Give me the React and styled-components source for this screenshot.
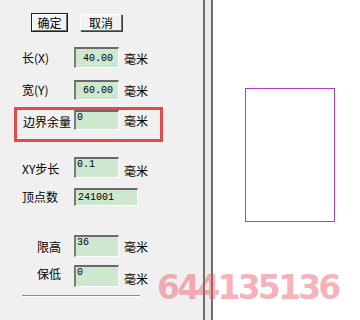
import styled, { createGlobalStyle } from "styled-components";

const Global = createGlobalStyle`
    html, body {
        margin: 0;
        padding: 0;
        background: #ffffff;
    }
    body {
        width: 360px;
        height: 320px;
        overflow: hidden;
        font-family: "Noto Sans CJK SC", "Liberation Sans", sans-serif;
    }
`

const fields = [
    { label: "长(X)", value: "40.00", align: "right", top: 16, h: 21, ly: 0, uy: 1 },
    { label: "宽(Y)", value: "60.00", align: "right", top: 12, h: 20, ly: 0, uy: 1 },
]

const lowerFields = [
    { label: "XY步长", value: "0.1", top: 15, h: 21, ly: 1, uy: 3 },
    { label: "顶点数", value: "241001", top: 10, h: 18, w: 64, mid: true, ly: 0 },
    { label: "限高", value: "36", top: 29, h: 22, ly: 1, uy: 1, indent: 15 },
    { label: "保低", value: "0", top: 8, h: 22, ly: -2, uy: 3, indent: 15 },
]

export default function App() {
    return (
        <Screen>
            <Global />

            <Panel>
                <Buttons>
                    <Button $primary>确定</Button>
                    <Button>取消</Button>
                </Buttons>

                {fields.map(f => (
                    <Field key={f.label} $top={f.top} $h={f.h}>
                        <Label $dy={f.ly}>{f.label}</Label>
                        <Input $h={f.h} $align={f.align}>{f.value}</Input>
                        <Unit $dy={f.uy}>毫米</Unit>
                    </Field>
                ))}

                <Highlight>
                    <Field $top={0} $h={20} $pad={6}>
                        <Label $dy={2} $w={51}>边界余量</Label>
                        <Input $h={20}>0</Input>
                        <Unit $dy={1}>毫米</Unit>
                    </Field>
                </Highlight>

                {lowerFields.map(f => (
                    <Field key={f.label} $top={f.top} $h={f.h} $pad={22 + (f.indent || 0)}>
                        <Label $dy={f.ly} $w={52 - (f.indent || 0)}>{f.label}</Label>
                        <Input $h={f.h} $w={f.w} $mid={f.mid}>{f.value}</Input>
                        {f.uy !== undefined && <Unit $dy={f.uy}>毫米</Unit>}
                    </Field>
                ))}

                <Rule />
            </Panel>

            <Splitter />

            <Canvas>
                <Sheet />
            </Canvas>

            <Watermark>644135136</Watermark>
        </Screen>
    )
}

const Screen = styled.div`
    position: relative;
    display: flex;
    width: 360px;
    height: 320px;
    background: #ffffff;
    overflow: hidden;
`

const Panel = styled.div`
    width: 203px;
    flex-shrink: 0;
    background: #f0f0f0;
    padding-top: 14px;
    box-sizing: border-box;
    display: flex;
    flex-direction: column;
`

const Buttons = styled.div`
    display: flex;
    gap: 13px;
    padding-left: 32px;
`

const Button = styled.button`
    height: 17px;
    width: ${p => p.$primary ? 35 : 42}px;
    padding: 0;
    margin: 0;
    box-sizing: border-box;
    font-family: "Noto Sans CJK SC", sans-serif;
    font-size: 12px;
    line-height: 13px;
    color: #000;
    background: #f2f2f2;
    border: 1px solid;
    border-color: #ffffff #707070 #707070 #ffffff;
    box-shadow: ${p => p.$primary ? "0 0 0 1px #202020" : "1px 1px 0 #404040"};
`

const Field = styled.div`
    display: flex;
    align-items: center;
    height: ${p => p.$h}px;
    margin-top: ${p => p.$top}px;
    padding-left: ${p => p.$pad ?? 22}px;
`

const Label = styled.div`
    width: ${p => p.$w ?? 52}px;
    flex-shrink: 0;
    font-size: 12px;
    line-height: 14px;
    color: #000;
    white-space: nowrap;
    margin-top: ${p => p.$dy * 2}px;
    font-family: "Noto Sans CJK SC", sans-serif;
`

const Input = styled.div`
    width: ${p => p.$w ?? 45}px;
    height: ${p => p.$h}px;
    box-sizing: border-box;
    background: #cde8cf;
    border-style: solid;
    border-width: 2px 1px 1px 2px;
    border-color: #6a6a6a #ffffff #ffffff #7a7a7a;
    font-family: "Liberation Mono", monospace;
    font-size: 10px;
    color: #000;
    display: flex;
    align-items: ${p => p.$align === "right" || p.$mid ? "center" : "flex-start"};
    justify-content: ${p => p.$align === "right" ? "flex-end" : "flex-start"};
    padding: ${p => p.$align === "right" ? "0 5px 0 0" : p.$mid ? "0 0 0 2px" : "0 0 0 1px"};
    line-height: 11px;
`

const Unit = styled.div`
    margin-left: 5px;
    font-size: 12px;
    line-height: 14px;
    color: #000;
    margin-top: ${p => p.$dy * 2}px;
    font-family: "Noto Sans CJK SC", sans-serif;
`

const Highlight = styled.div`
    margin: 7px 0 0 14px;
    width: 149px;
    height: 35px;
    box-sizing: border-box;
    border: 3px solid #e04a4a;
`

const Rule = styled.div`
    margin: 8px 0 0 22px;
    width: 118px;
    height: 1px;
    background: #8c8c8c;
    box-shadow: 0 1px 0 #ffffff;
`

const Splitter = styled.div`
    width: 6px;
    flex-shrink: 0;
    background: #ececec;
    border-left: 2px solid #6e6e6e;
    border-right: 2px solid #6e6e6e;
`

const Canvas = styled.div`
    flex: 1;
    background: #ffffff;
    padding: 88px 0 0 32px;
`

const Sheet = styled.div`
    width: 90px;
    height: 134px;
    box-sizing: border-box;
    border: 1px solid #b43cc4;
`

const Watermark = styled.div`
    position: absolute;
    left: 157px;
    top: 270px;
    font-family: "DejaVu Sans", "Liberation Sans", sans-serif;
    font-weight: bold;
    font-size: 33px;
    line-height: 36px;
    letter-spacing: -2.8px;
    color: rgba(238, 80, 96, 0.45);
    pointer-events: none;
`
